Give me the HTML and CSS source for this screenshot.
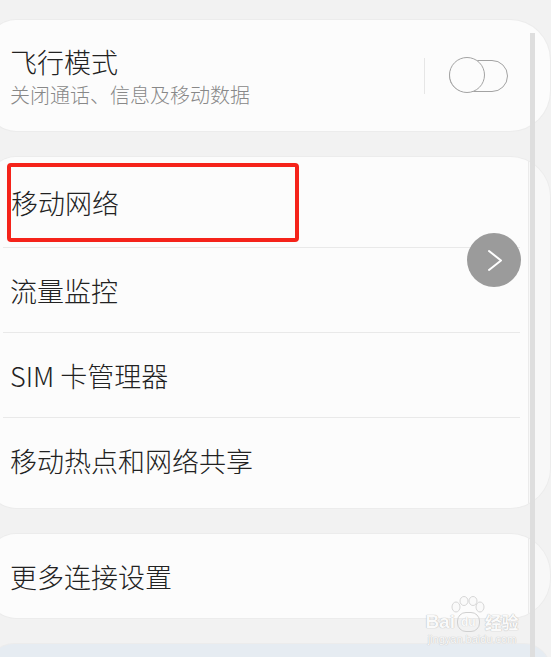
FILE: index.html
```html
<!DOCTYPE html>
<html lang="zh-CN">
<head>
    <meta charset="UTF-8">
    <meta name="viewport" content="width=device-width, initial-scale=1.0">
    <title>连接</title>
    <link rel="stylesheet" href="styles.css">
</head>
<body>

<div class="screen">
    <div class="list">
        <section class="card card-first">
            <div class="row row-toggle">
                <div class="text">
                    <div class="title">飞行模式</div>
                    <div class="sub">关闭通话、信息及移动数据</div>
                </div>
                <span class="vdiv"></span>
                <span class="toggle"><span class="knob"></span></span>
            </div>
        </section>

        <section class="card card-split">
            <div class="row"><span class="title marked">移动网络</span></div>
            <div class="sep"></div>
            <div class="row"><span class="title">流量监控</span></div>
            <div class="sep"></div>
            <div class="row"><span class="title">SIM 卡管理器</span></div>
            <div class="sep"></div>
            <div class="row"><span class="title">移动热点和网络共享</span></div>
        </section>

        <section class="card card-split card-single">
            <div class="row"><span class="title">更多连接设置</span></div>
        </section>

        <section class="card card-blue"></section>
    </div>

    <div class="scrollbar"></div>

    <div class="float-btn">
        <svg width="54" height="54" viewBox="0 0 54 54">
            <polyline points="22,18 34,27.5 22,37" fill="none" stroke="#fff" stroke-width="2" stroke-linecap="round" stroke-linejoin="round"/>
        </svg>
    </div>

    <div class="watermark">
        <svg class="paw" width="40" height="20" viewBox="0 0 40 20">
            <ellipse cx="9" cy="11" rx="4" ry="5" />
            <ellipse cx="17" cy="5" rx="4" ry="4.5" />
            <ellipse cx="26" cy="5" rx="4" ry="4.5" />
            <ellipse cx="33" cy="11" rx="4" ry="5" />
        </svg>
        <div class="wm-line">
            <span class="wm-bai">Bai</span>
            <span class="wm-du">du</span>
            <span class="wm-jy">经验</span>
        </div>
        <div class="wm-url">jingyan.baidu.com</div>
    </div>
</div>

</body>
</html>
```

FILE: styles.css
```css
body {
    margin: 0;
    padding: 0;
    background-color: #f2f2f2;
    font-family: "Noto Sans CJK SC", "Noto Sans", sans-serif;
    overflow: hidden;
}

.screen {
    position: relative;
    width: 551px;
    height: 657px;
    overflow: hidden;
}

.list {
    display: flex;
    flex-direction: column;
    gap: 26px;
    padding-top: 20px;
    margin-left: -12px;
    width: 562px;
}

.card {
    background-color: #fcfcfc;
    border-radius: 28px 40px 40px 28px;
    box-shadow: 0 0 0 1px #ececec;
}

.card-first {
    height: 111px;
    display: flex;
    align-items: center;
}

.card-split {
    padding: 6px 0;
    border-radius: 28px 40px 40px 28px;
    background: linear-gradient(to right, #fcfcfc 540px, #ebebeb 540px, #ebebeb 541px, #f8f8f8 541px);
}

.card-single {
    padding: 0;
}

.card-blue {
    height: 60px;
    background-color: #e6ecf2;
    border-radius: 26px;
}

.row {
    height: 84px;
    display: flex;
    align-items: center;
    padding-left: 22px;
}

.row-toggle {
    flex: 1;
    height: auto;
    padding-right: 42px;
}

.text {
    flex: 1;
    display: flex;
    flex-direction: column;
    gap: 3px;
}

.title {
    font-size: 27px;
    line-height: 35px;
    font-weight: 300;
    color: #222;
}

.sub {
    font-size: 20px;
    line-height: 26px;
    font-weight: 300;
    color: #888;
}

.vdiv {
    width: 1px;
    height: 36px;
    background-color: #e6e6e6;
    margin-right: 24px;
}

.toggle {
    position: relative;
    width: 59px;
    height: 32px;
    box-sizing: border-box;
    border: 1.5px solid #a3a3a3;
    border-radius: 16px;
}

.knob {
    position: absolute;
    left: -1.5px;
    top: -3.5px;
    width: 36px;
    height: 36px;
    box-sizing: border-box;
    border: 1.5px solid #a3a3a3;
    border-radius: 50%;
    background-color: #fcfcfc;
}

.marked {
    box-sizing: border-box;
    width: 292px;
    height: 79px;
    margin-left: -3px;
    margin-bottom: 5px;
    display: flex;
    align-items: center;
    border: 4px solid #f5231a;
    border-radius: 4px;
}

.sep {
    height: 1px;
    background-color: #e9e9e9;
    margin-left: 15px;
    margin-right: 30px;
}

.scrollbar {
    position: absolute;
    left: 530px;
    top: 33px;
    bottom: 0;
    width: 5px;
    background-color: #dedede;
}

.float-btn {
    position: absolute;
    left: 467px;
    top: 233px;
    width: 54px;
    height: 54px;
    border-radius: 50%;
    background-color: #9b9b9b;
}

.float-btn svg {
    display: block;
}

.watermark {
    position: absolute;
    left: 420px;
    top: 596px;
    width: 104px;
    display: flex;
    flex-direction: column;
    align-items: center;
    color: #fafafa;
}

.paw {
    margin-left: -10px;
    margin-bottom: -4px;
}

.paw ellipse {
    fill: #fafafa;
    stroke: #d6d6d6;
    stroke-width: 1;
}

.wm-line {
    display: flex;
    align-items: center;
    gap: 2px;
    font-family: "Liberation Sans", sans-serif;
    font-weight: bold;
    font-size: 19px;
    line-height: 20px;
}

.wm-bai,
.wm-jy {
    text-shadow: 0 0 1px #bdbdbd, 0 0 1px #bdbdbd;
}

.wm-jy {
    font-family: "Noto Sans CJK SC", sans-serif;
    font-size: 17px;
    margin-left: 3px;
}

.wm-du {
    font-size: 12px;
    line-height: 18px;
    padding: 0 3px;
    border-radius: 9px;
    border: 1.5px solid #d0d0d0;
    color: #fafafa;
    text-shadow: 0 0 1px #bdbdbd;
}

.wm-url {
    font-family: "Liberation Sans", sans-serif;
    font-size: 11px;
    line-height: 14px;
    color: #fafafa;
    text-shadow: 0 0 1px #c4c4c4, 0 0 1px #c4c4c4;
}
```
